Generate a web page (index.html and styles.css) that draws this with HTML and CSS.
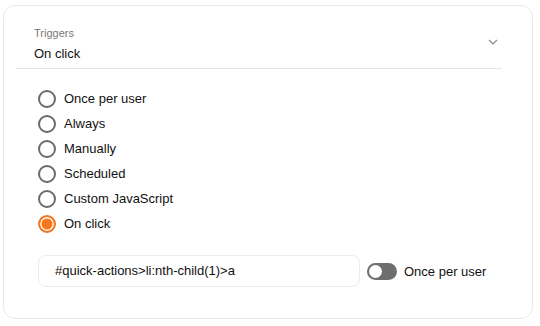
FILE: index.html
```html
<!DOCTYPE html>
<html>
<head>
<meta charset="utf-8">
<link rel="stylesheet" href="styles.css">
</head>
<body>
<div class="card">
  <div class="select">
    <div class="select-text">
      <div class="select-label">Triggers</div>
      <div class="select-value">On click</div>
    </div>
    <svg class="chevron" width="10" height="6" viewBox="0 0 10 6"><path d="M1 1l4 4 4-4" fill="none" stroke="#8a8a8a" stroke-width="1.2"/></svg>
  </div>
  <div class="radios">
    <label class="radio"><span class="dot"></span>Once per user</label>
    <label class="radio"><span class="dot"></span>Always</label>
    <label class="radio"><span class="dot"></span>Manually</label>
    <label class="radio"><span class="dot"></span>Scheduled</label>
    <label class="radio"><span class="dot"></span>Custom JavaScript</label>
    <label class="radio checked"><span class="dot"></span>On click</label>
  </div>
  <div class="row">
    <div class="input">#quick-actions&gt;li:nth-child(1)&gt;a</div>
    <div class="toggle"><span class="knob"></span></div>
    <span class="toggle-label">Once per user</span>
  </div>
</div>
</body>
</html>
```
FILE: styles.css
```css
* { box-sizing: border-box; }
html, body { margin: 0; padding: 0; background: #fff; }
body {
  font-family: "Liberation Sans", Arial, sans-serif;
  color: #1a1a1a;
  padding: 5px 8px 8px 3px;
}
.card {
  width: 530px;
  height: 314px;
  border: 1px solid #ebe8e4;
  border-radius: 12px;
  padding: 0 30px 0 12px;
}
.select {
  display: flex;
  align-items: center;
  justify-content: space-between;
  height: 63px;
  border-bottom: 1px solid #dfe6ee;
  padding: 14px 0 0 18px;
}
.select-label { font-size: 11px; color: #777; line-height: 14px; }
.select-value { font-size: 13px; color: #111; line-height: 16px; margin-top: 6px; }
.chevron { margin-right: 4px; margin-top: -4px; }
.radios {
  display: flex;
  flex-direction: column;
  gap: 6px;
  padding: 20px 0 0 22px;
}
.radio {
  display: flex;
  align-items: center;
  gap: 8px;
  font-size: 13px;
  height: 19px;
  color: #111;
}
.dot {
  width: 18px; height: 18px;
  border: 2px solid #6b6b6b;
  border-radius: 50%;
  background: #fff;
}
.radio.checked .dot {
  border-color: #f5781f;
  background: #f5781f;
  box-shadow: inset 0 0 0 1.5px #fff;
}
.row {
  display: flex;
  align-items: center;
  padding: 22px 0 0 22px;
}
.input {
  width: 322px;
  height: 32px;
  border: 1px solid #eeeae6;
  border-radius: 8px;
  font-size: 13px;
  line-height: 30px;
  padding-left: 16px;
  color: #111;
}
.toggle {
  width: 30px; height: 17px;
  border-radius: 9px;
  background: #6e6e6e;
  margin-left: 7px;
  padding: 2px;
}
.knob {
  display: block;
  width: 13px; height: 13px;
  border-radius: 50%;
  background: #fff;
}
.toggle-label { font-size: 13px; margin-left: 7px; color: #111; }
```
